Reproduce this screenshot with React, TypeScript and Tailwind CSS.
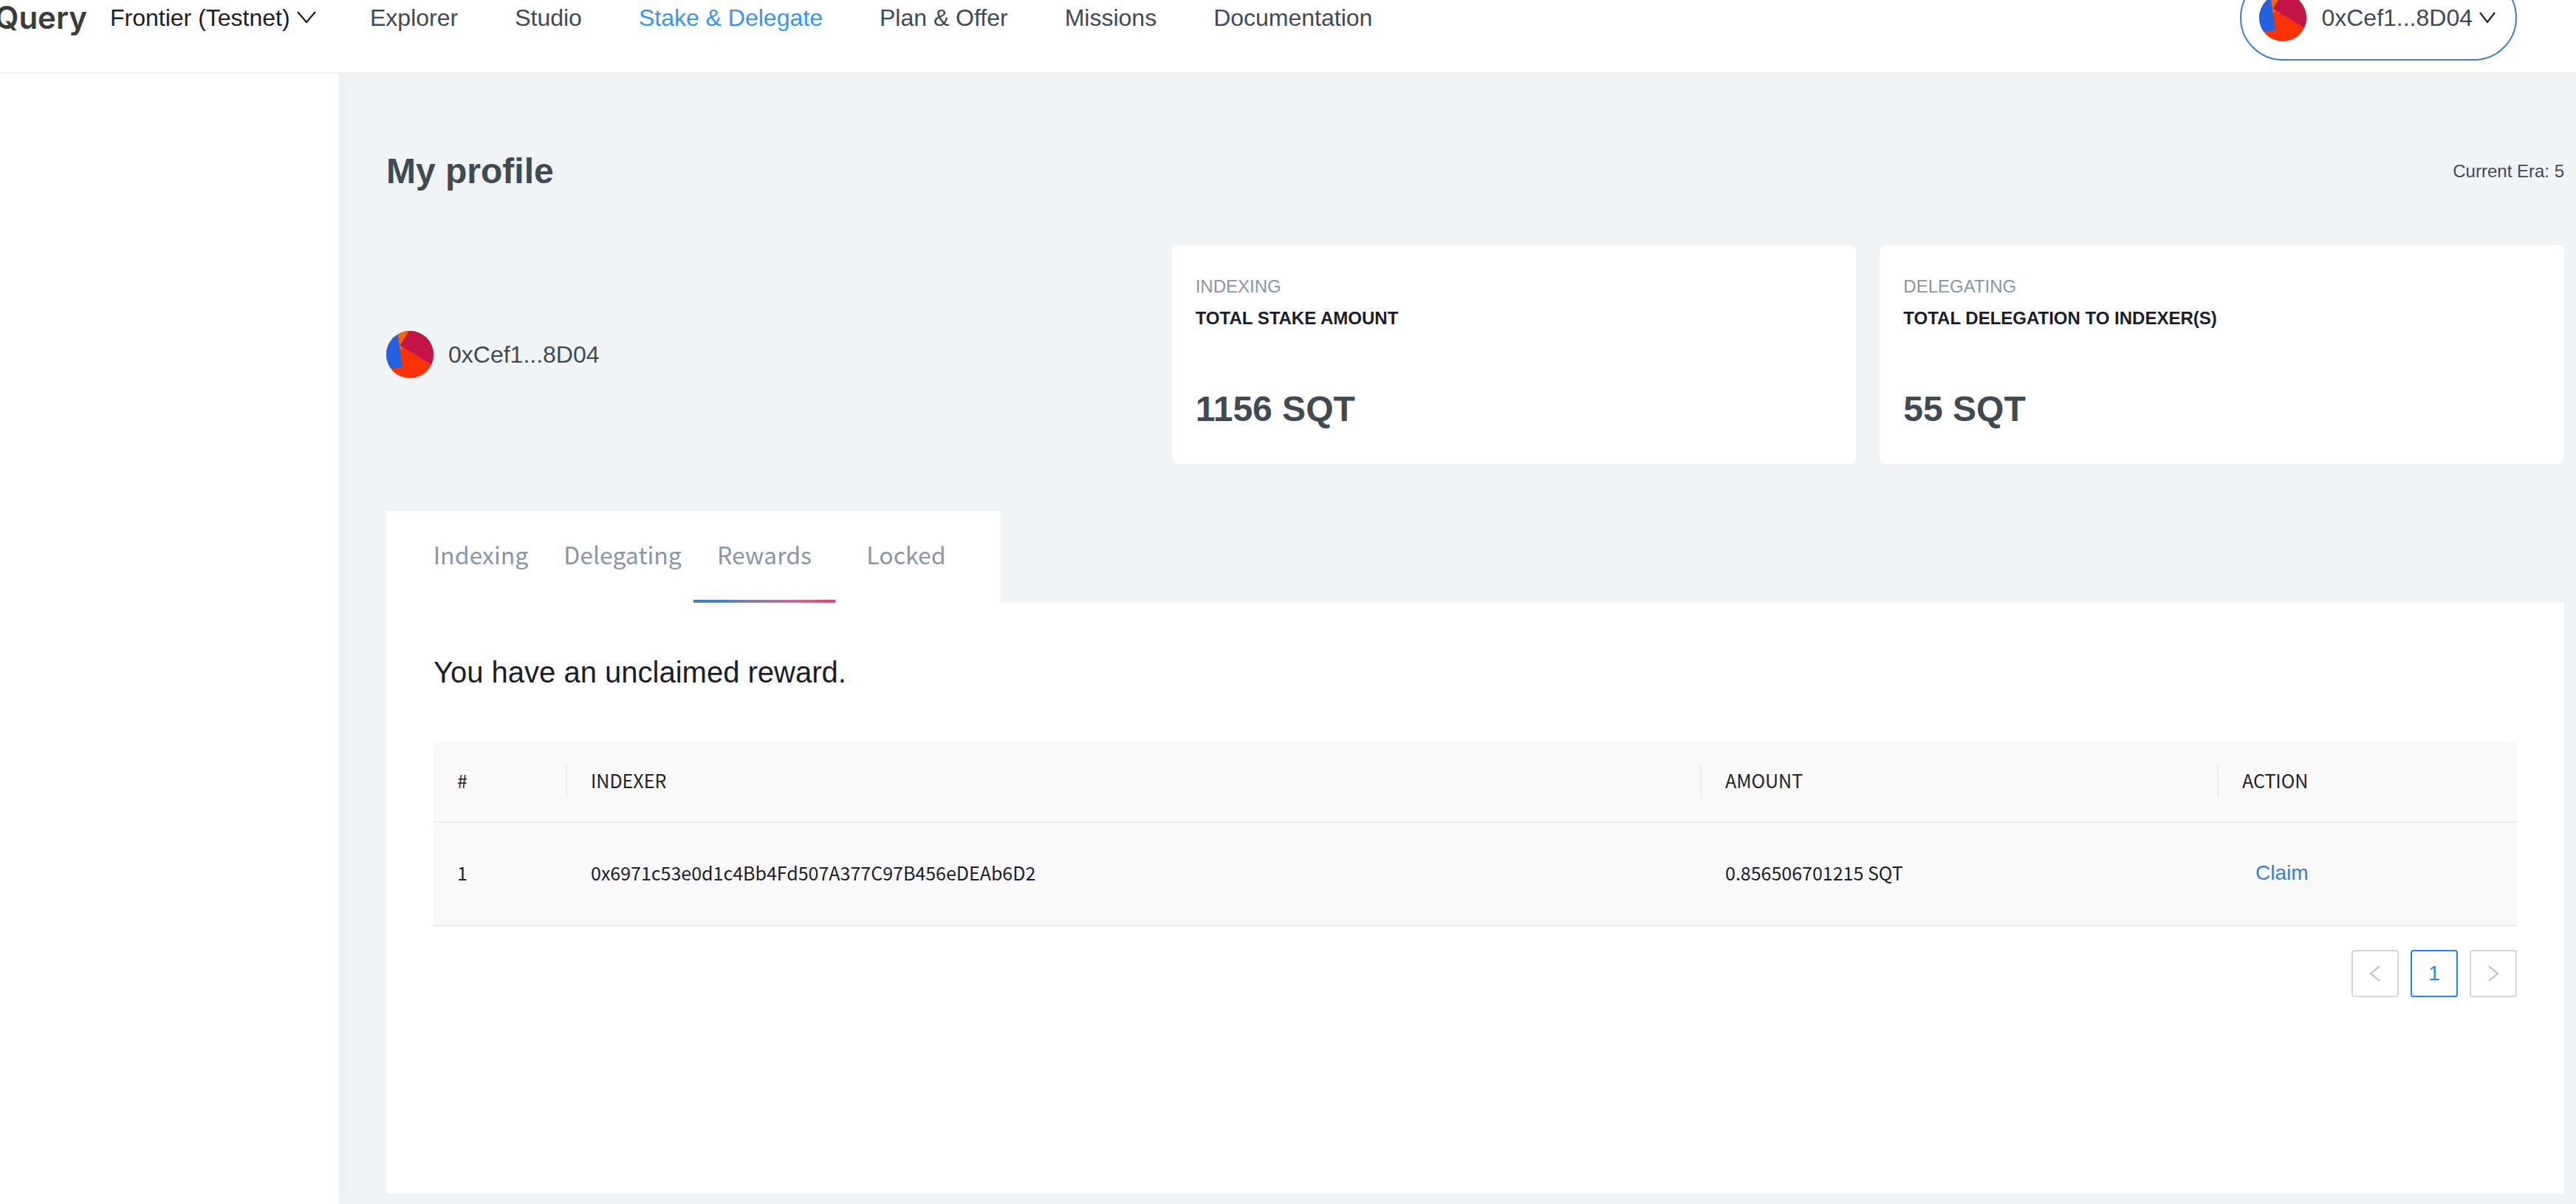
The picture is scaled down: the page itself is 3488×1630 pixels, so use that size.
import React from "react";

const NAV_ITEMS = [
  { label: "Explorer", active: false },
  { label: "Studio", active: false },
  { label: "Stake & Delegate", active: true },
  { label: "Plan & Offer", active: false },
  { label: "Missions", active: false },
  { label: "Documentation", active: false },
];

const STATS = [
  { category: "INDEXING", title: "TOTAL STAKE AMOUNT", value: "1156 SQT" },
  { category: "DELEGATING", title: "TOTAL DELEGATION TO INDEXER(S)", value: "55 SQT" },
];

const TABS = ["Indexing", "Delegating", "Rewards", "Locked"];

const REWARDS = [
  { id: 1, indexer: "0x6971c53e0d1c4Bb4Fd507A377C97B456eDEAb6D2", amount: "0.856506701215 SQT" },
];

const ACCOUNT = "0xCef1...8D04";

function Avatar() {
  return (
    <span className="block size-16 shrink-0 overflow-hidden rounded-full bg-[#fb3205]">
      <svg viewBox="0 0 64 64" className="size-16" aria-hidden="true">
        <polygon points="14,-2 33,-2 19,19 23,23 19,26 15,20" fill="#fb6303" />
        <polygon points="14.8,-1 22,48.5 -5,52.6 -5,-1" fill="#2262e0" />
        <polygon points="36.5,-9 18.6,19.6 70,51 70,-9" fill="#c31447" />
      </svg>
    </span>
  );
}

function Chevron({ points, className }: { points: string; className: string }) {
  return (
    <svg viewBox="0 0 28 28" fill="none" stroke="currentColor" strokeWidth="2.2" className={className} aria-hidden="true">
      <polyline points={points} />
    </svg>
  );
}

function Header() {
  return (
    <header className="relative z-10 border-b-2 border-[#eeeeee] bg-white pb-[50px]">
      <div className="flex h-12 items-center pr-20 text-[32px] leading-12">
        <a href="#home" className="flex w-[118px] shrink-0 justify-end font-[Inter,sans-serif] text-[42px] font-semibold text-[#3b3b3b]">
          Query
        </a>
        <button type="button" className="ml-[31px] flex w-[280px] items-center justify-between text-[#1a1d2b]">
          Frontier (Testnet)
          <Chevron points="2,6 14,20 26,6" className="size-7" />
        </button>
        <nav className="ml-[72px] flex grow items-center gap-[77px] text-[#3f4a52]">
          {NAV_ITEMS.map((item) => (
            <a key={item.label} href="#nav" className={item.active ? "text-[#3494ff]" : ""}>
              {item.label}
            </a>
          ))}
        </nav>
        <button
          type="button"
          className="flex h-[116px] shrink-0 items-center rounded-full border-2 border-[#3b7ddb] px-6 text-[#3f4a52]"
        >
          <Avatar />
          <span className="ml-5">{ACCOUNT}</span>
          <Chevron points="4,7 14,20 24,7" className="ml-1.5 size-7 text-[#222222]" />
        </button>
      </div>
    </header>
  );
}

function StatCard({ category, title, value }: { category: string; title: string; value: string }) {
  return (
    <article className="rounded-lg bg-white px-8 pt-[34px] pb-[38px]">
      <p className="text-2xl leading-[43px] text-[#8896a6]">{category}</p>
      <h2 className="text-2xl leading-[43px] font-bold text-[#1a1d2b]">{title}</h2>
      <p className="mt-[66px] text-5xl leading-[72px] font-bold text-[#3f4a52]">{value}</p>
    </article>
  );
}

function TabBar() {
  return (
    <div role="tablist" className="flex w-fit bg-white px-8 font-['Noto_Sans_CJK_SC',sans-serif] text-[32px] text-[#8896a6]">
      {TABS.map((tab) => (
        <button key={tab} type="button" role="tab" aria-selected={tab === "Rewards"} className="flex w-48 flex-col items-center">
          <span className="pt-[30px] pb-[34px] leading-14">{tab}</span>
          <span className={tab === "Rewards" ? "h-1 w-full bg-linear-to-r from-[#3b80dd] from-20% to-[#ff3872] to-95%" : "h-1 w-full"} />
        </button>
      ))}
    </div>
  );
}

function RewardsTable() {
  const head = "relative h-[110px] px-8 pb-0.5 font-normal text-left border-b-2 border-[#ececec]";
  const divider =
    " after:absolute after:right-0 after:top-8 after:h-11 after:w-0.5 after:bg-[#ececec]";
  const cell = "h-[140px] px-8 pb-0.5 border-b-2 border-[#ececec]";
  return (
    <table className="w-full table-fixed border-separate border-spacing-0 overflow-hidden rounded-t bg-[#f9f9f9] font-['Noto_Sans_CJK_SC',sans-serif] text-[25px] text-[#1a1d2b]">
      <colgroup>
        <col className="w-[181px]" />
        <col />
        <col className="w-[700px]" />
        <col className="w-[404px]" />
      </colgroup>
      <thead className="text-[#222222]">
        <tr>
          <th scope="col" className={head + divider}>#</th>
          <th scope="col" className={head + divider}>INDEXER</th>
          <th scope="col" className={head + divider}>AMOUNT</th>
          <th scope="col" className={head}>ACTION</th>
        </tr>
      </thead>
      <tbody>
        {REWARDS.map((reward) => (
          <tr key={reward.id}>
            <td className={cell}>{reward.id}</td>
            <td className={cell}>{reward.indexer}</td>
            <td className={cell}>{reward.amount}</td>
            <td className={cell}>
              <button type="button" className="px-[18px] font-['Liberation_Sans',sans-serif] text-[28px] text-[#3b7ddb]">
                Claim
              </button>
            </td>
          </tr>
        ))}
      </tbody>
    </table>
  );
}

function Pagination() {
  const box = "flex size-16 items-center justify-center rounded border-2 ";
  return (
    <nav aria-label="Pagination" className="mt-8 flex justify-end gap-4 text-[28px]">
      <button type="button" disabled aria-label="Previous page" className={box + "border-[#d5d5d5] text-[#c0c0c0]"}>
        <Chevron points="20,4 8,14 20,24" className="size-7" />
      </button>
      <button type="button" aria-current="page" className={box + "border-[#1a85ff] text-[#1a85ff]"}>
        1
      </button>
      <button type="button" disabled aria-label="Next page" className={box + "border-[#d5d5d5] text-[#c0c0c0]"}>
        <Chevron points="8,4 20,14 8,24" className="size-7" />
      </button>
    </nav>
  );
}

export default function App() {
  return (
    <div className="flex min-h-screen flex-col overflow-hidden bg-white font-['Liberation_Sans',Arial,sans-serif]">
      <Header />
      <div className="flex grow">
        <aside className="relative w-[459px] shrink-0 bg-white shadow-[0_0_24px_rgba(0,0,0,0.04)]" />
        <main className="min-w-0 grow bg-[#f0f4f7] pt-24 pr-4 pb-3.5 pl-16">
          <div className="flex h-[72px] items-center justify-between text-[#3f4a52]">
            <h1 className="text-5xl font-bold">My profile</h1>
            <p className="text-2xl">Current Era: 5</p>
          </div>
          <section className="mt-16 grid grid-cols-[1032fr_927fr_927fr] gap-8">
            <div className="flex items-center gap-5 text-[32px] text-[#3f4a52]">
              <Avatar />
              <span>{ACCOUNT}</span>
            </div>
            {STATS.map((stat) => (
              <StatCard key={stat.category} {...stat} />
            ))}
          </section>
          <section className="mt-16">
            <TabBar />
            <div className="min-h-[800px] bg-white px-16 pt-16">
              <h2 className="mb-16 text-[40px] leading-[60px] text-[#1a1d2b]">You have an unclaimed reward.</h2>
              <RewardsTable />
              <Pagination />
            </div>
          </section>
        </main>
      </div>
    </div>
  );
}
